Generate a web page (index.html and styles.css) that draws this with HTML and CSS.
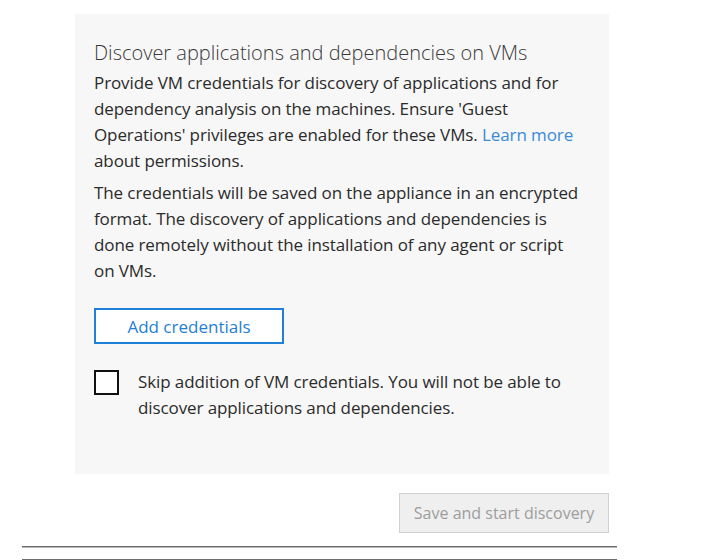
FILE: index.html
```html
<!DOCTYPE html>
<html>
<head>
<meta charset="utf-8">
<link rel="stylesheet" href="styles.css">
</head>
<body>
<div class="page">
  <section class="panel">
    <h2 class="title">Discover applications and dependencies on VMs</h2>
    <p class="text">Provide VM credentials for discovery of applications and for dependency analysis on the machines. Ensure 'Guest Operations' privileges are enabled for these VMs. <a class="link" href="#">Learn more</a> about permissions.</p>
    <p class="text">The credentials will be saved on the appliance in an encrypted format. The discovery of applications and dependencies is done remotely without the installation of any agent or script on VMs.</p>
    <button class="btn-outline" type="button">Add credentials</button>
    <label class="check">
      <span class="box"></span>
      <span class="check-text">Skip addition of VM credentials. You will not be able to discover applications and dependencies.</span>
    </label>
  </section>
  <div class="actions">
    <button class="btn-disabled" type="button">Save and start discovery</button>
  </div>
</div>
<div class="rules">
  <div class="rule"></div>
  <div class="rule rule-2"></div>
</div>
</body>
</html>
```
FILE: styles.css
```css
html, body {
  margin: 0;
  padding: 0;
  background: #ffffff;
}
body {
  font-family: "Open Sans", "Noto Sans", sans-serif;
  color: #2b2b2b;
  width: 701px;
  height: 560px;
  overflow: hidden;
}
.page {
  padding: 14px 0 0 75px;
  width: 534px;
}
.panel {
  background: #f7f7f7;
  height: 460px;
  box-sizing: border-box;
  padding: 26px 15px 0 19px;
}
.title {
  margin: 0;
  font-size: 20px;
  font-weight: 300;
  color: #3a3a3a;
  line-height: 26px;
}
.text {
  margin: 4px 0 0 0;
  font-size: 17px;
  line-height: 26px;
  letter-spacing: -0.1px;
  width: 490px;
}
.text + .text {
  margin-top: 6px;
}
.link {
  color: #3a8ad6;
  text-decoration: none;
}
.btn-outline {
  display: block;
  margin-top: 24px;
  width: 190px;
  height: 36px;
  box-sizing: border-box;
  background: #ffffff;
  border: 2px solid #1f80d8;
  color: #1f7fd4;
  font-family: inherit;
  font-size: 17px;
  padding: 0;
}
.check {
  display: flex;
  align-items: flex-start;
  margin-top: 26px;
  gap: 19px;
}
.box {
  flex: none;
  width: 25px;
  height: 25px;
  box-sizing: border-box;
  border: 2px solid #111;
  background: #fff;
}
.check-text {
  font-size: 17px;
  line-height: 26px;
  letter-spacing: -0.1px;
  width: 455px;
  margin-top: -1px;
}
.actions {
  display: flex;
  justify-content: flex-end;
  margin-top: 19px;
}
.btn-disabled {
  width: 210px;
  height: 40px;
  box-sizing: border-box;
  background: #efefef;
  border: 1px solid #d0d0d0;
  color: #9d9d9d;
  font-family: inherit;
  font-size: 16px;
  padding: 0;
}
.rules {
  margin: 13px 0 0 22px;
  width: 595px;
}
.rule {
  height: 1px;
  background: #6e6e6e;
  border-bottom: 1px solid #b8b8b8;
}
.rule-2 {
  margin-top: 11px;
}
```
